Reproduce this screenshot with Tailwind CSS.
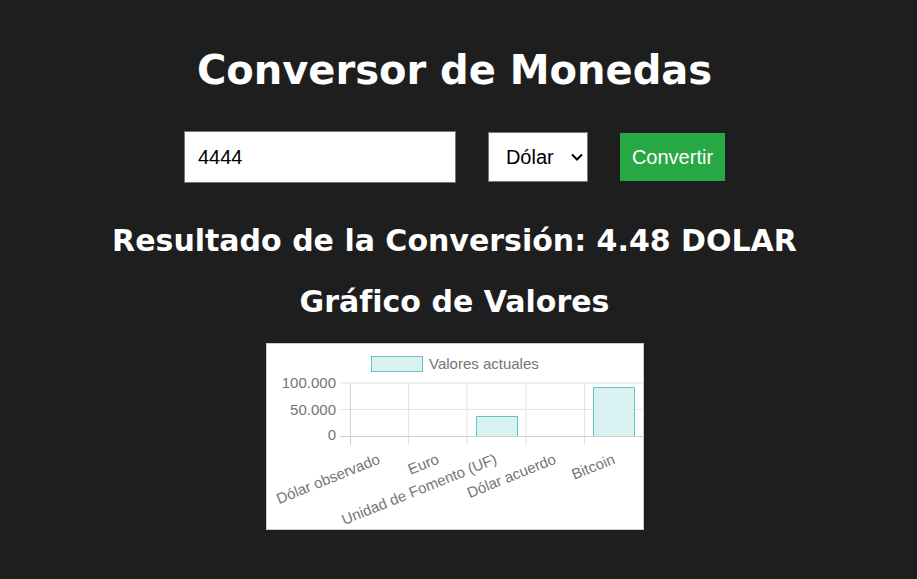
<!DOCTYPE html>
<html lang="es">
<head>
<meta charset="utf-8">
<meta name="viewport" content="width=device-width, initial-scale=1">
<title>Conversor de Monedas</title>
<script src="https://cdn.jsdelivr.net/npm/@tailwindcss/browser@4"></script>
</head>
<body class="min-h-screen bg-[#1e1e1e] text-white font-['DejaVu_Sans',Verdana,sans-serif]">
<main class="flex flex-col items-center pt-[45px] pr-2">
  <h1 class="text-[40px] leading-[50px] font-bold">Conversor de Monedas</h1>
  <form class="mt-9 flex items-center gap-8 font-['Liberation_Sans',Arial,sans-serif] text-xl">
    <input type="text" aria-label="Monto" value="4444" class="h-[52px] w-[272px] border border-[#767676] bg-white px-[13px] text-black">
    <div class="relative">
      <select aria-label="Moneda" class="block h-[50px] w-[100px] appearance-none border border-[#767676] bg-white px-[17px] text-black">
        <option>Dólar</option><option>Euro</option><option>UF</option><option>Bitcoin</option>
      </select>
      <svg class="pointer-events-none absolute top-5 right-1" width="14" height="11" viewBox="0 0 14 11" fill="none" stroke="#000" stroke-width="2" aria-hidden="true"><path d="M2 2.500L7 7.500L12 2.500"/></svg>
    </div>
    <button type="button" class="h-12 bg-[#28a745] px-3">Convertir</button>
  </form>
  <h2 class="mt-[38px] text-[30px] leading-10 font-bold">Resultado de la Conversión: 4.48 DOLAR</h2>
  <h2 class="mt-[21px] text-[30px] leading-10 font-bold">Gráfico de Valores</h2>
  <svg role="img" aria-label="Valores actuales" width="378" height="187" viewBox="0 0 378 187" class="mt-[21px] bg-white font-['Liberation_Sans',Arial,sans-serif]">
    <rect x="0.500" y="0.500" width="377" height="186" fill="none" stroke="#ccc"/>
    <g stroke="#e4e4e4" fill="none">
      <path d="M74 66.500H377M142.500 40V102M318.500 40V102"/>
      <path stroke="#efefef" stroke-width="2" d="M74 40H377M201 40V102M260 40V102"/>
      <path stroke="#d0d0d0" d="M84.500 40V102M74 93.500H377"/>
    </g>
    <g fill="#daf1f1" stroke="#5fc7c7">
      <rect x="105.500" y="13.500" width="51" height="15"/>
      <path d="M210.500 93V73.500H251.500V93M327.500 93V44.500H368.500V93"/>
    </g>
    <g fill="#757575" font-size="15">
      <text x="163" y="26">Valores actuales</text>
      <g text-anchor="end">
        <text x="70" y="45">100.000</text><text x="70" y="72">50.000</text><text x="70" y="97">0</text>
        <text transform="translate(115 120) rotate(-22)">Dólar observado</text>
        <text transform="translate(174 120) rotate(-22)">Euro</text>
        <text transform="translate(232 120) rotate(-22)">Unidad de Fomento (UF)</text>
        <text transform="translate(291 120) rotate(-22)">Dólar acuerdo</text>
        <text transform="translate(350 120) rotate(-22)">Bitcoin</text>
      </g>
    </g>
  </svg>
</main>
</body>
</html>
